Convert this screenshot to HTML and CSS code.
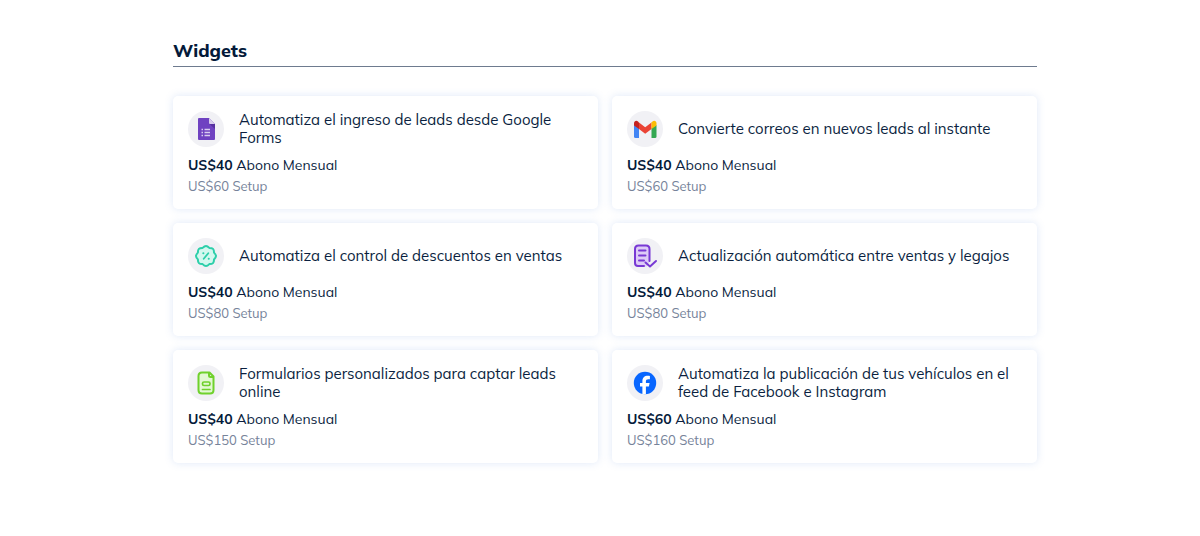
FILE: index.html
```
<!DOCTYPE html>
<html lang="es">
<head>
  <meta charset="utf-8">
  <meta name="viewport" content="width=device-width, initial-scale=1">
  <title>Widgets</title>
  <link rel="stylesheet" href="styles.css">
</head>
<body>
  <section class="widgets">
    <h2 class="widgets-title">Widgets</h2>

    <div class="grid">
      <article class="card">
        <div class="card-header">
          <span class="icon">
            <svg width="36" height="36" viewBox="0 0 36 36">
              <path d="M11 7h10l6 6v15q0 1-1 1H11q-1 0-1-1V8q0-1 1-1z" fill="#6f42c1"/>
              <path d="M21.500 13H27v5z" fill="#56309f"/>
              <path d="M21 7l6 6h-5q-1 0-1-1z" fill="#d8cdec"/>
              <path d="M16.500 18.500H22M16.500 21.500H22M16.500 24.500H22" stroke="#d9cdf0" stroke-width="1.300"/>
              <path d="M13.500 18.500H15M13.500 21.500H15M13.500 24.500H15" stroke="#d9cdf0" stroke-width="1.500"/>
            </svg>
          </span>
          <h3 class="card-title">Automatiza el ingreso de leads desde Google Forms</h3>
        </div>
        <p class="price"><strong>US$40</strong> Abono Mensual</p>
        <p class="setup">US$60 Setup</p>
      </article>

      <article class="card">
        <div class="card-header">
          <span class="icon">
            <svg width="36" height="36" viewBox="0 0 36 36">
              <path d="M7 14l5 3v10H8.500Q7 27 7 25.500z" fill="#4285f4"/>
              <path d="M29.500 14l-5 3v10H28q1.500 0 1.500-1.500z" fill="#34a853"/>
              <path d="M12 11.500l6.200 4.700 6.300-4.700V18l-6.300 4.800L12 18z" fill="#ea4335"/>
              <path d="M7 14.500v-2c0-2.700 2.500-3.300 4-2l1 1V18z" fill="#c5221f"/>
              <path d="M29.500 14.500v-2c0-2.700-2.500-3.300-4-2l-1 1V18z" fill="#fbbc04"/>
            </svg>
          </span>
          <h3 class="card-title">Convierte correos en nuevos leads al instante</h3>
        </div>
        <p class="price"><strong>US$40</strong> Abono Mensual</p>
        <p class="setup">US$60 Setup</p>
      </article>

      <article class="card">
        <div class="card-header">
          <span class="icon">
            <svg width="36" height="36" viewBox="0 0 36 36" fill="none" stroke="#2dcfaa" stroke-width="2" stroke-linecap="round" stroke-linejoin="round">
              <path d="M18 8q1.500 0 3.300 1.900 2.600-.1 3.700 1t1 3.700Q28 16.500 28 18t-2 3.400q.1 2.600-1 3.700t-3.700 1Q19.500 28 18 28t-3.400-1.900q-2.600.1-3.700-1t-1-3.700Q8 19.500 8 18t1.900-3.400q-.1-2.600 1-3.700t3.700-1Q16.500 8 18 8z" fill="#d3f8ef"/>
              <path d="M20.300 15.200l-4.600 5.600" stroke-width="1.800"/>
              <path d="M15.300 15.300h.1M20.700 20.700h.1"/>
            </svg>
          </span>
          <h3 class="card-title">Automatiza el control de descuentos en ventas</h3>
        </div>
        <p class="price"><strong>US$40</strong> Abono Mensual</p>
        <p class="setup">US$80 Setup</p>
      </article>

      <article class="card">
        <div class="card-header">
          <span class="icon">
            <svg width="36" height="36" viewBox="0 0 36 36" fill="none" stroke="#7839d4" stroke-width="2" stroke-linecap="round" stroke-linejoin="round">
              <path d="M10.500 7.500h9q3 0 3 3V24l-3 4.500h-9q-2.500 0-2.500-3.500V10.500q0-3 2.500-3z" fill="#ddcbf7" stroke="none"/>
              <path d="M17 28h-6q-3 0-3-3V11q0-3.500 3.500-3.500h7.500q3.500 0 3.500 3.500v12"/>
              <path d="M12 12.500h6.500M12 17.500h6.500M12 22.500h5"/>
              <path d="M18.500 24.500l4.500 4 6-5.500"/>
            </svg>
          </span>
          <h3 class="card-title">Actualización automática entre ventas y legajos</h3>
        </div>
        <p class="price"><strong>US$40</strong> Abono Mensual</p>
        <p class="setup">US$80 Setup</p>
      </article>

      <article class="card">
        <div class="card-header">
          <span class="icon">
            <svg width="36" height="36" viewBox="0 0 36 36" fill="none" stroke="#6fd12c" stroke-width="2" stroke-linecap="round" stroke-linejoin="round">
              <path d="M14 7.500h7.500l4 4V25q0 3.500-3.500 3.500h-8q-3.500 0-3.500-3.500V11q0-3.500 3.500-3.500z" fill="#e2f8d3"/>
              <path d="M21 8v2.500q0 1.500 1.500 1.500H25"/>
              <rect x="14.500" y="17" width="7.500" height="3.500" rx="1.500" stroke-width="1.700"/>
              <path d="M14.500 24.500H22" stroke-width="1.700"/>
            </svg>
          </span>
          <h3 class="card-title">Formularios personalizados para captar leads online</h3>
        </div>
        <p class="price"><strong>US$40</strong> Abono Mensual</p>
        <p class="setup">US$150 Setup</p>
      </article>

      <article class="card">
        <div class="card-header">
          <span class="icon">
            <svg width="36" height="36" viewBox="0 0 36 36">
              <circle cx="18" cy="18" r="11.200" fill="#0866ff"/>
              <path d="M15.400 29.200v-7.700H13v-3.400h2.400v-1.600c0-3.900 1.800-5.700 5.600-5.700.7 0 1.400.1 1.900.2v3.200h-1.500c-1.800 0-2.500.7-2.500 2.400v1.500h3.700l-.7 3.400h-3v7.800z" fill="#fff"/>
            </svg>
          </span>
          <h3 class="card-title">Automatiza la publicación de tus vehículos en el feed de Facebook e Instagram</h3>
        </div>
        <p class="price"><strong>US$60</strong> Abono Mensual</p>
        <p class="setup">US$160 Setup</p>
      </article>
    </div>
  </section>
</body>
</html>
```

FILE: styles.css
```
* {
  box-sizing: border-box;
}

body {
  margin: 0;
  background: #fff;
  color: #0b1f3f;
  font-family: Mulish, Lato, sans-serif;
}

h2,
h3,
p {
  margin: 0;
}

.widgets {
  padding: 38px 163px 72px 173px;
}

.widgets-title {
  padding-bottom: 2px;
  border-bottom: 1px solid #6e7b8f;
  font-size: 18px;
  line-height: 26px;
  font-weight: 800;
  color: #041a3a;
}

.grid {
  display: grid;
  grid-template-columns: 1fr 1fr;
  gap: 14px;
  margin-top: 29px;
}

.card {
  padding: 15px 15px 14px;
  border-radius: 5px;
  background: #fff;
  box-shadow: 0 0 8px rgba(80, 125, 215, 0.18);
}

.card-header {
  display: flex;
  align-items: center;
  gap: 15px;
}

.icon {
  flex: none;
  width: 36px;
  height: 36px;
  border-radius: 50%;
  background: #f1f1f5;
}

.icon svg {
  display: block;
}

.card-title {
  font-size: 15px;
  line-height: 18px;
  font-weight: 400;
}

.price {
  margin-top: 8px;
  font-size: 14px;
  line-height: 20px;
}

.price strong {
  font-weight: 700;
  color: #041a3a;
}

.setup {
  margin-top: 2px;
  font-size: 13px;
  line-height: 18px;
  color: #76839a;
}

@media (max-width: 900px) {
  .widgets {
    padding-left: 20px;
    padding-right: 20px;
  }
}

@media (max-width: 600px) {
  .grid {
    grid-template-columns: 1fr;
  }
}
```
